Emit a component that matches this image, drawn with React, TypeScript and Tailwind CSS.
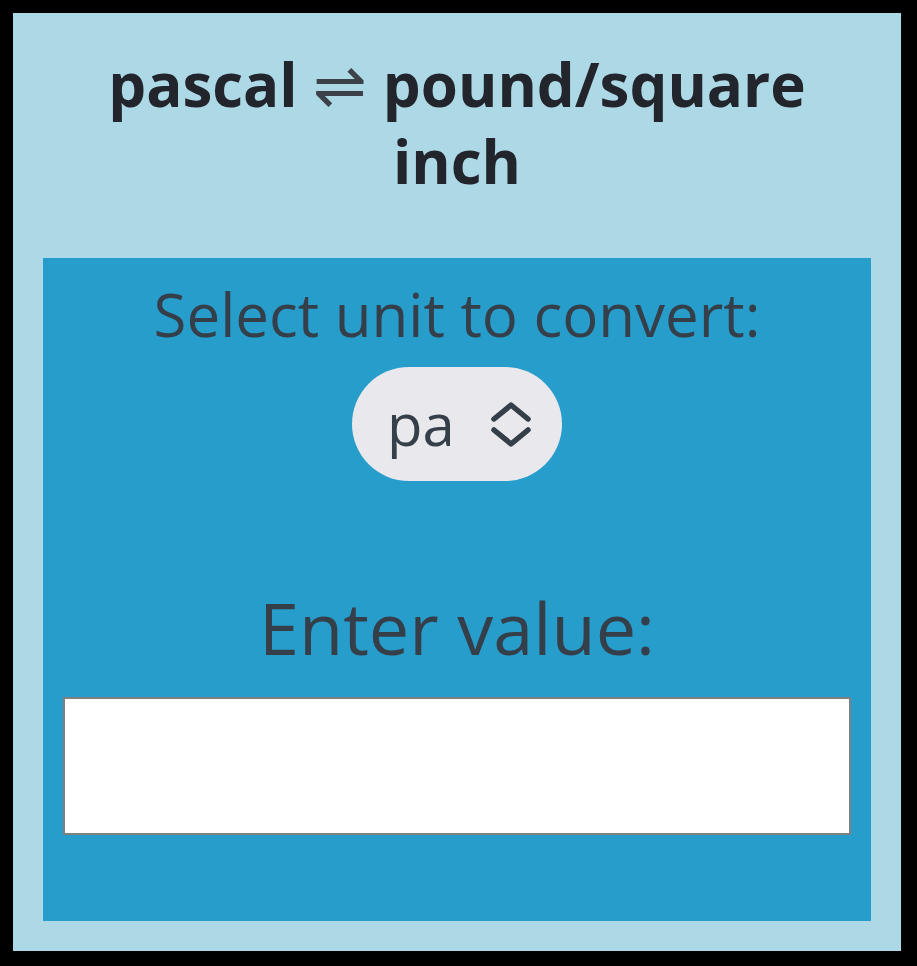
import { useState } from 'react';

// Up/down chevron pair drawn beside the unit picker
function UpDownIcon() {
    return (
        <svg width="40" height="48" viewBox="0 0 40 48" fill="none" stroke="#353f49" strokeWidth="5.5" strokeLinecap="round" strokeLinejoin="round">
            <polyline points="3,19 20,5 37,19" />
            <polyline points="3,30 20,44 37,30" />
        </svg>
    );
}

export default function App() {
    const [unit, setUnit] = useState('pa');
    const [value, setValue] = useState('');

    return (
        <div className="bg-black pl-[13px] pt-[13px] pr-[16px] pb-[15px] font-['Open_Sans',sans-serif]">
            <div className="bg-[#add8e6] px-[30px] pb-[30px]">
                {/* Header */}
                <h1 className="h-[245px] pt-[33px] px-[40px] text-center text-[60px] leading-[77px] font-bold text-[#22252b]">
                    pascal <span className="font-['DejaVu_Sans',sans-serif] font-extralight text-[64px] leading-[1px] text-[#3d424a]">⇌</span> pound/square inch
                </h1>

                {/* Converter panel */}
                <div className="bg-[#279dcc] h-[663px] px-[20px] pt-[20px] flex flex-col items-center">
                    <label className="text-[60px] leading-[72px] text-[#353f49]">Select unit to convert:</label>
                    <div className="mt-[17px] w-[210px] h-[114px] shrink-0 rounded-full bg-[#e9e9ed] flex items-center justify-center gap-[26px] pl-[4px]">
                        <select
                            value={unit}
                            onChange={e => setUnit(e.target.value)}
                            className="appearance-none bg-transparent text-[58px] leading-[70px] text-[#353f49] outline-none"
                        >
                            <option value="pa">pa</option>
                            <option value="psi">psi</option>
                        </select>
                        <UpDownIcon />
                    </div>
                    <label className="mt-[103px] text-[72px] leading-[86px] text-[#353f49]">Enter value:</label>
                    <input
                        type="text"
                        value={value}
                        onChange={e => setValue(e.target.value)}
                        className="mt-[27px] w-full h-[138px] shrink-0 bg-white border-2 border-[#808080] outline-none text-[48px] px-3"
                    />
                </div>
            </div>
        </div>
    );
}
